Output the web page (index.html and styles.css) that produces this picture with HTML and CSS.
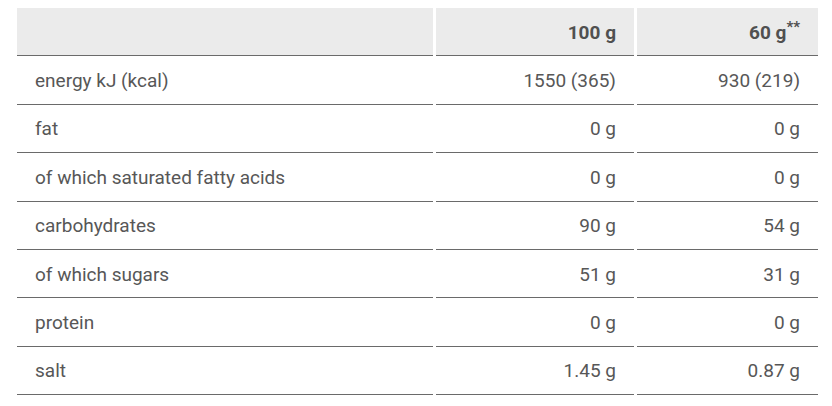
FILE: index.html
```html
<!DOCTYPE html>
<html lang="en">
<head>
<meta charset="utf-8">
<title>Nutrition facts</title>
<link rel="stylesheet" href="styles.css">
</head>
<body>
<table class="nutrition">
  <thead>
    <tr>
      <th class="label"></th>
      <th class="val col-a">100 g</th>
      <th class="val col-b">60 g<sup>**</sup></th>
    </tr>
  </thead>
  <tbody>
    <tr><td class="label">energy kJ (kcal)</td><td class="val">1550 (365)</td><td class="val">930 (219)</td></tr>
    <tr><td class="label">fat</td><td class="val">0 g</td><td class="val">0 g</td></tr>
    <tr><td class="label">of which saturated fatty acids</td><td class="val">0 g</td><td class="val">0 g</td></tr>
    <tr><td class="label">carbohydrates</td><td class="val">90 g</td><td class="val">54 g</td></tr>
    <tr><td class="label">of which sugars</td><td class="val">51 g</td><td class="val">31 g</td></tr>
    <tr><td class="label">protein</td><td class="val">0 g</td><td class="val">0 g</td></tr>
    <tr><td class="label">salt</td><td class="val">1.45 g</td><td class="val">0.87 g</td></tr>
  </tbody>
</table>
</body>
</html>
```
FILE: styles.css
```css
html, body {
  background: #ffffff;
}
body {
  margin: 8px 0 0 14px;
  font-family: Roboto, "Noto Sans", "Liberation Sans", sans-serif;
  font-size: 19px;
  color: #575757;
}
.nutrition {
  border-collapse: separate;
  border-spacing: 3px 0;
  table-layout: fixed;
  width: 807px;
}
.nutrition th,
.nutrition td {
  box-sizing: border-box;
  height: 48.4px;
  padding: 2px 18px 0;
  border-bottom: 1px solid #6a6a6a;
  vertical-align: middle;
  line-height: 22px;
}
.nutrition th {
  background: #ebebeb;
  font-weight: 700;
  color: #505050;
}
.nutrition .label {
  width: 416px;
  text-align: left;
  font-weight: 400;
}
.nutrition .col-a {
  width: 198px;
}
.nutrition .col-b {
  width: 181px;
}
.nutrition .val {
  text-align: right;
}
.nutrition sup {
  font-size: 15px;
  line-height: 0;
  vertical-align: 7px;
}
```
